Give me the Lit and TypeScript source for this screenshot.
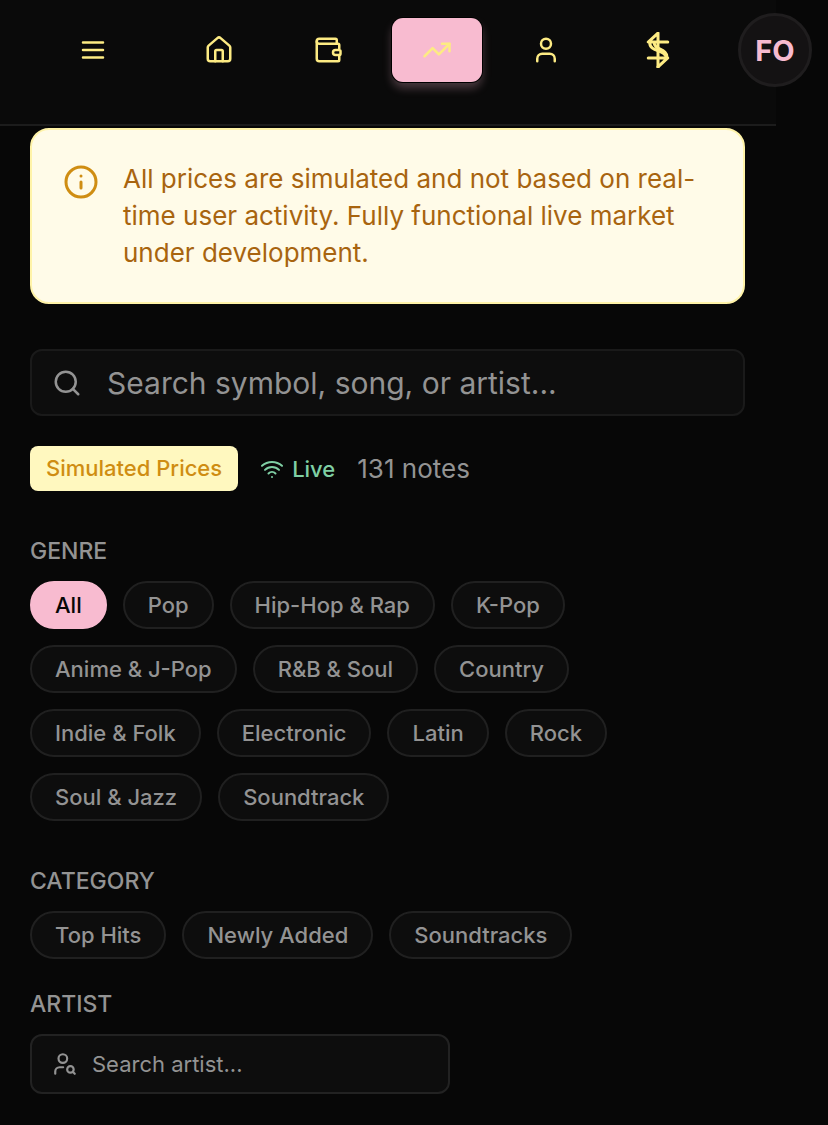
import { LitElement, html, css, svg } from "lit";
import { customElement, state } from "lit/decorators.js";

const icons = {
  menu: svg`<path d="M4 6h16M4 12h16M4 18h16"/>`,
  home: svg`<path d="M15 21v-8a1 1 0 0 0-1-1h-4a1 1 0 0 0-1 1v8"/><path d="M3 10a2 2 0 0 1 .709-1.528l7-5.999a2 2 0 0 1 2.582 0l7 5.999A2 2 0 0 1 21 10v9a2 2 0 0 1-2 2H5a2 2 0 0 1-2-2z"/>`,
  wallet: svg`<path d="M19 7V4a1 1 0 0 0-1-1H5a2 2 0 0 0 0 4h15a1 1 0 0 1 1 1v4h-3a2 2 0 0 0 0 4h3a1 1 0 0 0 1-1v-2a1 1 0 0 0-1-1"/><path d="M3 5v14a2 2 0 0 0 2 2h15a1 1 0 0 0 1-1v-4"/>`,
  trend: svg`<path d="M16 7h6v6"/><path d="m22 7-8.500 8.500-5-5L2 17"/>`,
  user: svg`<circle cx="12" cy="7" r="4"/><path d="M5 21v-2a4 4 0 0 1 4-4h6a4 4 0 0 1 4 4v2"/>`,
  dollar: svg`<path d="M12 23.300V.700L5.500 6.700h13"/><path d="M5.500 17.300h13l-6.500 6"/><path d="M6.500 7c0 7 10.500 4 11 10"/><path d="M9.500 7c-.500 5 9 4 8.500 10"/>`,
  info: svg`<circle cx="12" cy="12" r="10"/><path d="M12 16v-4M12 8h.01"/>`,
  search: svg`<circle cx="11" cy="11" r="8"/><path d="m21 21-4.340-4.340"/>`,
  wifi: svg`<path d="M12 20h.01M2 8.820a15 15 0 0 1 20 0M5 12.859a10 10 0 0 1 14 0M8.500 16.429a5 5 0 0 1 7 0"/>`,
  userSearch: svg`<circle cx="10" cy="7" r="4"/><path d="M10.300 15H7a4 4 0 0 0-4 4v2"/><circle cx="17" cy="17" r="3"/><path d="m21 21-1.900-1.900"/>`,
};

const icon = (name: keyof typeof icons, cls = "") =>
  html`<svg class="icon ${cls}" viewBox="0 0 24 24" aria-hidden="true">${icons[name]}</svg>`;

const GENRES = [
  "All", "Pop", "Hip-Hop & Rap", "K-Pop", "Anime & J-Pop", "R&B & Soul", "Country",
  "Indie & Folk", "Electronic", "Latin", "Rock", "Soul & Jazz", "Soundtrack",
];
const CATEGORIES = ["Top Hits", "Newly Added", "Soundtracks"];

@customElement("app-root")
export class AppRoot extends LitElement {
  @state() private genre = "All";
  @state() private category = "";

  static styles = css`
    :host {
      display: block;
      min-height: 100vh;
      background: #070707;
      color: #939393;
      font-family: Inter, "Liberation Sans", sans-serif;
      overflow-x: hidden;
    }
    * { box-sizing: border-box; }
    button, input { font: inherit; color: inherit; margin: 0; }
    button { cursor: pointer; }
    .icon {
      display: block;
      flex: none;
      fill: none;
      stroke: currentColor;
      stroke-width: 2;
      stroke-linecap: round;
      stroke-linejoin: round;
      width: 30px;
      height: 30px;
    }
    .page { margin-right: 52px; }
    .bar {
      display: flex;
      align-items: flex-start;
      height: 126px;
      padding: 13px 0 0 48px;
      background: #0a0a0a;
      border-bottom: 2px solid #1c1c1c;
    }
    .tabs { display: flex; gap: 19px; margin: 0 22px 0 36px; }
    .nav {
      display: grid;
      place-items: center;
      flex: none;
      width: 90px;
      height: 64px;
      margin-top: 5px;
      border-radius: 11px;
      color: #fdeb83;
      background: none;
      border: 0;
    }
    .nav.active {
      background: #f8bbd0;
      box-shadow: 0 0 0 1px #000, 0 6px 10px 0 rgba(248, 187, 208, 0.28);
    }
    .coin { width: 36px; height: 36px; }
    .avatar {
      flex: none;
      width: 74px;
      height: 74px;
      margin-left: 35px;
      padding: 0;
      border-radius: 50%;
      border: 3px solid #1f1d1e;
      background: #141213;
      color: #f8bbd0;
      font-size: 29px;
      font-weight: 700;
    }
    main { padding: 2px 31px 30px 30px; }
    .notice {
      display: flex;
      gap: 24px;
      padding: 30px;
      border: 2px solid #fff3a8;
      border-radius: 19px;
      background: #fffbe8;
      color: #a8640f;
      font-size: 26px;
      line-height: 37px;
    }
    .notice p { margin: 0; padding-bottom: 1px; }
    .notice .icon { width: 36px; height: 36px; margin-top: 4px; margin-left: 1px; color: #cf8d12; }
    .notice p { flex: 1; }
    .field {
      display: flex;
      align-items: center;
      background: #0d0d0d;
      border: 2px solid #1a1a1a;
      border-radius: 12px;
    }
    .field input {
      flex: 1;
      min-width: 0;
      padding: 0;
      border: 0;
      outline: 0;
      background: none;
    }
    .field input::placeholder { color: #939393; opacity: 1; }
    .search { margin-top: 45px; height: 67px; padding: 0 20px; gap: 25px; font-size: 30px; }
    .artist {
      width: 60%;
      min-width: 280px;
      max-width: 420px;
      height: 60px;
      padding: 0 20px;
      gap: 14px;
      font-size: 22px;
      border-color: #222;
    }
    .artist .icon { width: 26px; height: 26px; }
    .status { display: flex; align-items: center; margin-top: 30px; gap: 22px; font-size: 26px; }
    .badge {
      height: 45px;
      padding: 0 16px;
      border-radius: 8px;
      background: #fff8bf;
      color: #cf8d12;
      font-size: 22px;
      font-weight: 500;
      line-height: 45px;
    }
    .live { display: flex; align-items: center; gap: 8px; color: #7fcfa4; font-size: 22px; font-weight: 500; }
    .live .icon { width: 24px; height: 24px; }
    h2 { margin: 45px 0 15px; font-size: 23px; font-weight: 500; line-height: 30px; }
    .near { margin-top: 30px; }
    .chips { display: flex; flex-wrap: wrap; gap: 16px; }
    .chip {
      height: 48px;
      padding: 0 23px;
      border: 2px solid #202020;
      border-radius: 24px;
      background: #0d0d0d;
      font-size: 22px;
      font-weight: 500;
    }
    .chip.on { background: #f8bbd0; border-color: #f8bbd0; color: #070707; }
  `;

  private chip(label: string, on: boolean, pick: () => void) {
    return html`<button class="chip ${on ? "on" : ""}" aria-pressed=${on} @click=${pick}>${label}</button>`;
  }

  render() {
    return html`
      <div class="page">
        <header class="bar">
          <button class="nav" aria-label="Menu">${icon("menu")}</button>
          <nav class="tabs">
            <a class="nav" href="#home" aria-label="Home">${icon("home")}</a>
            <a class="nav" href="#wallet" aria-label="Wallet">${icon("wallet")}</a>
            <a class="nav active" href="#market" aria-label="Market" aria-current="page">${icon("trend")}</a>
            <a class="nav" href="#profile" aria-label="Profile">${icon("user")}</a>
          </nav>
          <button class="nav" aria-label="Funds">${icon("dollar", "coin")}</button>
          <button class="avatar">FO</button>
        </header>
        <main>
          <div class="notice" role="note">
            ${icon("info")}
            <p>All prices are simulated and not based on real-time user activity. Fully functional live market under development.</p>
          </div>
          <label class="field search">
            ${icon("search")}
            <input type="text" aria-label="Search notes" placeholder="Search symbol, song, or artist..." />
          </label>
          <div class="status">
            <span class="badge">Simulated Prices</span>
            <span class="live">${icon("wifi")}Live</span>
            <span>131 notes</span>
          </div>
          <section>
            <h2>GENRE</h2>
            <div class="chips">
              ${GENRES.map((g) => this.chip(g, g === this.genre, () => (this.genre = g)))}
            </div>
          </section>
          <section>
            <h2>CATEGORY</h2>
            <div class="chips">
              ${CATEGORIES.map((c) => this.chip(c, c === this.category, () => (this.category = c)))}
            </div>
          </section>
          <section>
            <h2 class="near">ARTIST</h2>
            <label class="field artist">
              ${icon("userSearch")}
              <input type="text" aria-label="Search artist" placeholder="Search artist..." />
            </label>
          </section>
        </main>
      </div>
    `;
  }
}
